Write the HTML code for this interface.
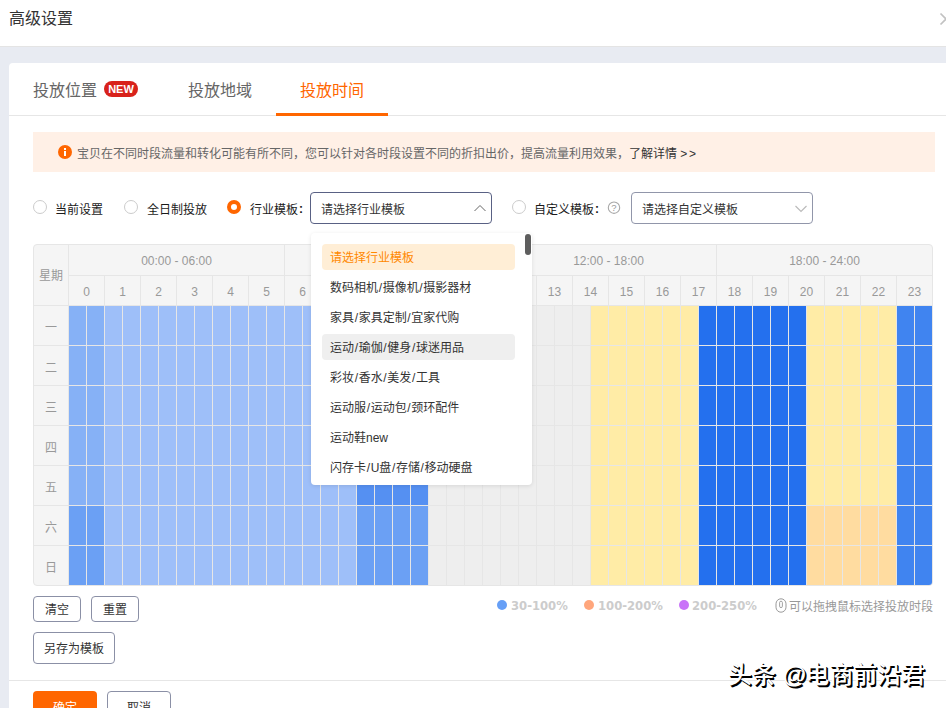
<!DOCTYPE html>
<html lang="zh-CN">
<head>
<meta charset="utf-8">
<title>高级设置</title>
<style>
*{box-sizing:border-box;margin:0;padding:0}
html,body{width:946px;height:708px;overflow:hidden;background:#e8ebf2}
body{position:relative;font-family:"Liberation Sans","Noto Sans CJK SC",sans-serif;font-size:12px;color:#333;line-height:1}
.abs,.abs>*{position:absolute}
#hd{position:absolute;left:0;top:0;width:946px;height:47px;background:#fff;border-bottom:1px solid #e4e4e4}
#hd .t{position:absolute;left:9px;top:11px;font-size:16px;line-height:16px;color:#333;white-space:nowrap}
#card{position:absolute;left:9px;top:63px;width:960px;height:700px;background:#fff;border-radius:4px 0 0 0}
.tab{position:absolute;top:83px;font-size:16px;line-height:16px;color:#666;white-space:nowrap}
.tab.on{color:#f60}
#new{position:absolute;left:104px;top:81px;width:34px;height:16px;border-radius:8px;background:#d8221b;color:#fff;font-size:11px;line-height:16px;font-weight:bold;text-align:center;letter-spacing:0}
#tabline{position:absolute;left:9px;top:115px;width:940px;height:1px;background:#e6e6e6}
#ink{position:absolute;left:276px;top:113px;width:112px;height:3px;background:#f60}
#notice{position:absolute;left:33px;top:132px;width:902px;height:40px;background:#fff0e6}
#notice .tx{position:absolute;left:44px;top:16px;line-height:12px;color:#666;white-space:nowrap}
#notice .tx b{font-weight:normal;color:#333}
#notice .ic{position:absolute;left:25px;top:13px;width:14px;height:14px;border-radius:50%;background:#f60}
#notice .ic:before{content:"";position:absolute;left:6px;top:3px;width:2px;height:2px;background:#fff}
#notice .ic:after{content:"";position:absolute;left:6px;top:6px;width:2px;height:5px;background:#fff}
.rd{position:absolute;top:200px;width:14px;height:14px;border-radius:50%;border:1px solid #ccc;background:#fff}
.rd.on{border:4px solid #f60}
.lb{position:absolute;top:204px;line-height:12px;color:#1a1a1a;white-space:nowrap}
.cl{margin-left:1px;position:relative;top:-1px}
.sel1{position:absolute;top:192px;height:32px;width:182px;border:1px solid #596184;border-radius:4px;background:#fff}
.sel1 span{position:absolute;left:10px;top:11px;line-height:12px;white-space:nowrap}
#tbl{position:absolute;left:33px;top:244px;width:900px;height:342px;background:#f5f5f5;border:1px solid #e6e6e6;border-radius:4px;overflow:hidden}
#tbl .bg{position:absolute;left:34px;top:60px;width:865px;height:281px;background:#e6e6e6}
#tbl .v{position:absolute;top:0;width:1px;background:#e6e6e6}
#tbl .h{position:absolute;left:0;height:1px;background:#e6e6e6}
.pd{position:absolute;top:0;width:216px;height:31px;line-height:33px;text-align:center;color:#999;border-left:1px solid #e6e6e6;border-bottom:1px solid #e6e6e6}
.hr{position:absolute;top:31px;width:36px;height:29px;line-height:33px;text-align:center;color:#999;border-left:1px solid #e6e6e6}
.day{position:absolute;left:0;width:34px;height:40px;line-height:44px;text-align:center;color:#999;border-top:1px solid #e6e6e6}
#wk{position:absolute;left:0;top:0;width:34px;height:60px;line-height:63px;text-align:center;color:#999}
.c{position:absolute;width:17px;height:39px;display:block}
.g{background:#eee}
.b1{background:#9ebff9}
.b2{background:#86b1f6}
.b3{background:#6ba0f4}
.b4{background:#5590f2}
.b5{background:#4084f0}
.b6{background:#2470ee}
.y{background:#ffeca6}
.o{background:#ffdca0}
#dd{position:absolute;left:311px;top:233px;width:221px;height:252px;background:#fff;border-radius:4px;box-shadow:0 1px 4px rgba(0,0,0,.10)}
.it{position:absolute;left:11px;width:193px;height:26px;line-height:28px;padding-left:8px;border-radius:4px;color:#333;white-space:nowrap}
.it.sel{background:#ffeed6;color:#f80}
.it.hov{background:#efefef}
#thumb{position:absolute;left:214px;top:1px;width:6px;height:21px;border-radius:3px;background:#5e5e5e}
.sl{font-style:normal;margin:0 .65px}
.btn{position:absolute;border:1px solid #8b90a6;border-radius:4px;background:#fff;text-align:center;color:#333;white-space:nowrap}
.lg{position:absolute;top:599px;line-height:14px;font-family:"DejaVu Sans","Liberation Sans",sans-serif;font-weight:bold;font-size:11.6px;color:#ccc;white-space:nowrap}
.dot{position:absolute;top:600px;width:10px;height:10px;border-radius:50%}
#tip{position:absolute;left:789px;top:601px;line-height:12px;color:#999;white-space:nowrap}
#ftline{position:absolute;left:9px;top:680px;width:940px;height:1px;background:#e6e6e6}
#wm{position:absolute;left:728px;top:661px;font-size:24px;line-height:28px;color:#fff;text-shadow:1px 1px 0 #000,1.6px 1.6px 0 #000;white-space:nowrap;font-weight:500;letter-spacing:-0.05px}
</style>
</head>
<body>
<div id="hd"><div class="t">高级设置</div>
<svg style="position:absolute;left:939px;top:12px" width="14" height="14" viewBox="0 0 14 14"><path d="M1.5 1.5 L12.5 12.5 M12.5 1.5 L1.5 12.5" stroke="#c2c2c2" stroke-width="1.7" fill="none"/></svg>
</div>
<div id="card"></div>
<div class="tab" style="left:33px">投放位置</div>
<div id="new">NEW</div>
<div class="tab" style="left:188px">投放地域</div>
<div class="tab on" style="left:300px">投放时间</div>
<div id="tabline"></div><div id="ink"></div>
<div id="notice"><div class="ic"></div><div class="tx">宝贝在不同时段流量和转化可能有所不同，您可以针对各时段设置不同的折扣出价，提高流量利用效果，<b>了解详情 <span style="letter-spacing:1.6px">&gt;&gt;</span></b></div></div>

<div class="rd" style="left:33px"></div><div class="lb" style="left:55px">当前设置</div>
<div class="rd" style="left:124px"></div><div class="lb" style="left:147px">全日制投放</div>
<div class="rd on" style="left:227px"></div><div class="lb" style="left:250px">行业模板<b class="cl">:</b></div>
<div class="sel1" style="left:310px"><span>请选择行业模板</span>
<svg style="position:absolute;left:162px;top:11px" width="14" height="8" viewBox="0 0 14 8"><path d="M1.5 7 L7 1.5 L12.5 7" stroke="#666" stroke-width="1" fill="none"/></svg></div>
<div class="rd" style="left:512px"></div><div class="lb" style="left:534px">自定义模板<b class="cl">:</b></div>
<svg style="position:absolute;left:607px;top:201px" width="14" height="14" viewBox="0 0 14 14"><circle cx="7" cy="6.7" r="5.7" fill="none" stroke="#a8a8a8" stroke-width="1.1"/><text x="7" y="10" font-size="9.5" text-anchor="middle" fill="#999" font-family="Liberation Sans, sans-serif">?</text></svg>
<div class="sel1" style="left:631px;border-color:#9196aa"><span>请选择自定义模板</span>
<svg style="position:absolute;left:162px;top:12px" width="14" height="8" viewBox="0 0 14 8"><path d="M1.5 1 L7 6.5 L12.5 1" stroke="#bbb" stroke-width="1.2" fill="none"/></svg></div>

<div id="tbl">
<div class="bg"></div>
<div id="wk">星期</div>
<div class="pd" style="left:34px">00:00 - 06:00</div><div class="pd" style="left:250px">06:00 - 12:00</div><div class="pd" style="left:466px">12:00 - 18:00</div><div class="pd" style="left:682px">18:00 - 24:00</div>
<div class="hr" style="left:34px">0</div><div class="hr" style="left:70px">1</div><div class="hr" style="left:106px">2</div><div class="hr" style="left:142px">3</div><div class="hr" style="left:178px">4</div><div class="hr" style="left:214px">5</div><div class="hr" style="left:250px">6</div><div class="hr" style="left:286px">7</div><div class="hr" style="left:322px">8</div><div class="hr" style="left:358px">9</div><div class="hr" style="left:394px">10</div><div class="hr" style="left:430px">11</div><div class="hr" style="left:466px">12</div><div class="hr" style="left:502px">13</div><div class="hr" style="left:538px">14</div><div class="hr" style="left:574px">15</div><div class="hr" style="left:610px">16</div><div class="hr" style="left:646px">17</div><div class="hr" style="left:682px">18</div><div class="hr" style="left:718px">19</div><div class="hr" style="left:754px">20</div><div class="hr" style="left:790px">21</div><div class="hr" style="left:826px">22</div><div class="hr" style="left:862px">23</div>
<div class="day" style="top:60px">一</div><div class="day" style="top:100px">二</div><div class="day" style="top:140px">三</div><div class="day" style="top:180px">四</div><div class="day" style="top:220px">五</div><div class="day" style="top:260px">六</div><div class="day" style="top:300px">日</div>
<i class="c b2" style="left:35px;top:61px"></i><i class="c b2" style="left:53px;top:61px"></i><i class="c b1" style="left:71px;top:61px"></i><i class="c b1" style="left:89px;top:61px"></i><i class="c b1" style="left:107px;top:61px"></i><i class="c b1" style="left:125px;top:61px"></i><i class="c b1" style="left:143px;top:61px"></i><i class="c b1" style="left:161px;top:61px"></i><i class="c b1" style="left:179px;top:61px"></i><i class="c b1" style="left:197px;top:61px"></i><i class="c b1" style="left:215px;top:61px"></i><i class="c b1" style="left:233px;top:61px"></i><i class="c b1" style="left:251px;top:61px"></i><i class="c b1" style="left:269px;top:61px"></i><i class="c b1" style="left:287px;top:61px"></i><i class="c b1" style="left:305px;top:61px"></i><i class="c b4" style="left:323px;top:61px"></i><i class="c b4" style="left:341px;top:61px"></i><i class="c b4" style="left:359px;top:61px"></i><i class="c b4" style="left:377px;top:61px"></i><i class="c g" style="left:395px;top:61px"></i><i class="c g" style="left:413px;top:61px"></i><i class="c g" style="left:431px;top:61px"></i><i class="c g" style="left:449px;top:61px"></i><i class="c g" style="left:467px;top:61px"></i><i class="c g" style="left:485px;top:61px"></i><i class="c g" style="left:503px;top:61px"></i><i class="c g" style="left:521px;top:61px"></i><i class="c g" style="left:539px;top:61px"></i><i class="c y" style="left:557px;top:61px"></i><i class="c y" style="left:575px;top:61px"></i><i class="c y" style="left:593px;top:61px"></i><i class="c y" style="left:611px;top:61px"></i><i class="c y" style="left:629px;top:61px"></i><i class="c y" style="left:647px;top:61px"></i><i class="c b6" style="left:665px;top:61px"></i><i class="c b6" style="left:683px;top:61px"></i><i class="c b6" style="left:701px;top:61px"></i><i class="c b6" style="left:719px;top:61px"></i><i class="c b6" style="left:737px;top:61px"></i><i class="c b6" style="left:755px;top:61px"></i><i class="c y" style="left:773px;top:61px"></i><i class="c y" style="left:791px;top:61px"></i><i class="c y" style="left:809px;top:61px"></i><i class="c y" style="left:827px;top:61px"></i><i class="c y" style="left:845px;top:61px"></i><i class="c b5" style="left:863px;top:61px"></i><i class="c b5" style="left:881px;top:61px"></i><i class="c b2" style="left:35px;top:101px"></i><i class="c b2" style="left:53px;top:101px"></i><i class="c b1" style="left:71px;top:101px"></i><i class="c b1" style="left:89px;top:101px"></i><i class="c b1" style="left:107px;top:101px"></i><i class="c b1" style="left:125px;top:101px"></i><i class="c b1" style="left:143px;top:101px"></i><i class="c b1" style="left:161px;top:101px"></i><i class="c b1" style="left:179px;top:101px"></i><i class="c b1" style="left:197px;top:101px"></i><i class="c b1" style="left:215px;top:101px"></i><i class="c b1" style="left:233px;top:101px"></i><i class="c b1" style="left:251px;top:101px"></i><i class="c b1" style="left:269px;top:101px"></i><i class="c b1" style="left:287px;top:101px"></i><i class="c b1" style="left:305px;top:101px"></i><i class="c b4" style="left:323px;top:101px"></i><i class="c b4" style="left:341px;top:101px"></i><i class="c b4" style="left:359px;top:101px"></i><i class="c b4" style="left:377px;top:101px"></i><i class="c g" style="left:395px;top:101px"></i><i class="c g" style="left:413px;top:101px"></i><i class="c g" style="left:431px;top:101px"></i><i class="c g" style="left:449px;top:101px"></i><i class="c g" style="left:467px;top:101px"></i><i class="c g" style="left:485px;top:101px"></i><i class="c g" style="left:503px;top:101px"></i><i class="c g" style="left:521px;top:101px"></i><i class="c g" style="left:539px;top:101px"></i><i class="c y" style="left:557px;top:101px"></i><i class="c y" style="left:575px;top:101px"></i><i class="c y" style="left:593px;top:101px"></i><i class="c y" style="left:611px;top:101px"></i><i class="c y" style="left:629px;top:101px"></i><i class="c y" style="left:647px;top:101px"></i><i class="c b6" style="left:665px;top:101px"></i><i class="c b6" style="left:683px;top:101px"></i><i class="c b6" style="left:701px;top:101px"></i><i class="c b6" style="left:719px;top:101px"></i><i class="c b6" style="left:737px;top:101px"></i><i class="c b6" style="left:755px;top:101px"></i><i class="c y" style="left:773px;top:101px"></i><i class="c y" style="left:791px;top:101px"></i><i class="c y" style="left:809px;top:101px"></i><i class="c y" style="left:827px;top:101px"></i><i class="c y" style="left:845px;top:101px"></i><i class="c b5" style="left:863px;top:101px"></i><i class="c b5" style="left:881px;top:101px"></i><i class="c b2" style="left:35px;top:141px"></i><i class="c b2" style="left:53px;top:141px"></i><i class="c b1" style="left:71px;top:141px"></i><i class="c b1" style="left:89px;top:141px"></i><i class="c b1" style="left:107px;top:141px"></i><i class="c b1" style="left:125px;top:141px"></i><i class="c b1" style="left:143px;top:141px"></i><i class="c b1" style="left:161px;top:141px"></i><i class="c b1" style="left:179px;top:141px"></i><i class="c b1" style="left:197px;top:141px"></i><i class="c b1" style="left:215px;top:141px"></i><i class="c b1" style="left:233px;top:141px"></i><i class="c b1" style="left:251px;top:141px"></i><i class="c b1" style="left:269px;top:141px"></i><i class="c b1" style="left:287px;top:141px"></i><i class="c b1" style="left:305px;top:141px"></i><i class="c b4" style="left:323px;top:141px"></i><i class="c b4" style="left:341px;top:141px"></i><i class="c b4" style="left:359px;top:141px"></i><i class="c b4" style="left:377px;top:141px"></i><i class="c g" style="left:395px;top:141px"></i><i class="c g" style="left:413px;top:141px"></i><i class="c g" style="left:431px;top:141px"></i><i class="c g" style="left:449px;top:141px"></i><i class="c g" style="left:467px;top:141px"></i><i class="c g" style="left:485px;top:141px"></i><i class="c g" style="left:503px;top:141px"></i><i class="c g" style="left:521px;top:141px"></i><i class="c g" style="left:539px;top:141px"></i><i class="c y" style="left:557px;top:141px"></i><i class="c y" style="left:575px;top:141px"></i><i class="c y" style="left:593px;top:141px"></i><i class="c y" style="left:611px;top:141px"></i><i class="c y" style="left:629px;top:141px"></i><i class="c y" style="left:647px;top:141px"></i><i class="c b6" style="left:665px;top:141px"></i><i class="c b6" style="left:683px;top:141px"></i><i class="c b6" style="left:701px;top:141px"></i><i class="c b6" style="left:719px;top:141px"></i><i class="c b6" style="left:737px;top:141px"></i><i class="c b6" style="left:755px;top:141px"></i><i class="c y" style="left:773px;top:141px"></i><i class="c y" style="left:791px;top:141px"></i><i class="c y" style="left:809px;top:141px"></i><i class="c y" style="left:827px;top:141px"></i><i class="c y" style="left:845px;top:141px"></i><i class="c b5" style="left:863px;top:141px"></i><i class="c b5" style="left:881px;top:141px"></i><i class="c b2" style="left:35px;top:181px"></i><i class="c b2" style="left:53px;top:181px"></i><i class="c b1" style="left:71px;top:181px"></i><i class="c b1" style="left:89px;top:181px"></i><i class="c b1" style="left:107px;top:181px"></i><i class="c b1" style="left:125px;top:181px"></i><i class="c b1" style="left:143px;top:181px"></i><i class="c b1" style="left:161px;top:181px"></i><i class="c b1" style="left:179px;top:181px"></i><i class="c b1" style="left:197px;top:181px"></i><i class="c b1" style="left:215px;top:181px"></i><i class="c b1" style="left:233px;top:181px"></i><i class="c b1" style="left:251px;top:181px"></i><i class="c b1" style="left:269px;top:181px"></i><i class="c b1" style="left:287px;top:181px"></i><i class="c b1" style="left:305px;top:181px"></i><i class="c b4" style="left:323px;top:181px"></i><i class="c b4" style="left:341px;top:181px"></i><i class="c b4" style="left:359px;top:181px"></i><i class="c b4" style="left:377px;top:181px"></i><i class="c g" style="left:395px;top:181px"></i><i class="c g" style="left:413px;top:181px"></i><i class="c g" style="left:431px;top:181px"></i><i class="c g" style="left:449px;top:181px"></i><i class="c g" style="left:467px;top:181px"></i><i class="c g" style="left:485px;top:181px"></i><i class="c g" style="left:503px;top:181px"></i><i class="c g" style="left:521px;top:181px"></i><i class="c g" style="left:539px;top:181px"></i><i class="c y" style="left:557px;top:181px"></i><i class="c y" style="left:575px;top:181px"></i><i class="c y" style="left:593px;top:181px"></i><i class="c y" style="left:611px;top:181px"></i><i class="c y" style="left:629px;top:181px"></i><i class="c y" style="left:647px;top:181px"></i><i class="c b6" style="left:665px;top:181px"></i><i class="c b6" style="left:683px;top:181px"></i><i class="c b6" style="left:701px;top:181px"></i><i class="c b6" style="left:719px;top:181px"></i><i class="c b6" style="left:737px;top:181px"></i><i class="c b6" style="left:755px;top:181px"></i><i class="c y" style="left:773px;top:181px"></i><i class="c y" style="left:791px;top:181px"></i><i class="c y" style="left:809px;top:181px"></i><i class="c y" style="left:827px;top:181px"></i><i class="c y" style="left:845px;top:181px"></i><i class="c b5" style="left:863px;top:181px"></i><i class="c b5" style="left:881px;top:181px"></i><i class="c b2" style="left:35px;top:221px"></i><i class="c b2" style="left:53px;top:221px"></i><i class="c b1" style="left:71px;top:221px"></i><i class="c b1" style="left:89px;top:221px"></i><i class="c b1" style="left:107px;top:221px"></i><i class="c b1" style="left:125px;top:221px"></i><i class="c b1" style="left:143px;top:221px"></i><i class="c b1" style="left:161px;top:221px"></i><i class="c b1" style="left:179px;top:221px"></i><i class="c b1" style="left:197px;top:221px"></i><i class="c b1" style="left:215px;top:221px"></i><i class="c b1" style="left:233px;top:221px"></i><i class="c b1" style="left:251px;top:221px"></i><i class="c b1" style="left:269px;top:221px"></i><i class="c b1" style="left:287px;top:221px"></i><i class="c b1" style="left:305px;top:221px"></i><i class="c b4" style="left:323px;top:221px"></i><i class="c b4" style="left:341px;top:221px"></i><i class="c b4" style="left:359px;top:221px"></i><i class="c b4" style="left:377px;top:221px"></i><i class="c g" style="left:395px;top:221px"></i><i class="c g" style="left:413px;top:221px"></i><i class="c g" style="left:431px;top:221px"></i><i class="c g" style="left:449px;top:221px"></i><i class="c g" style="left:467px;top:221px"></i><i class="c g" style="left:485px;top:221px"></i><i class="c g" style="left:503px;top:221px"></i><i class="c g" style="left:521px;top:221px"></i><i class="c g" style="left:539px;top:221px"></i><i class="c y" style="left:557px;top:221px"></i><i class="c y" style="left:575px;top:221px"></i><i class="c y" style="left:593px;top:221px"></i><i class="c y" style="left:611px;top:221px"></i><i class="c y" style="left:629px;top:221px"></i><i class="c y" style="left:647px;top:221px"></i><i class="c b6" style="left:665px;top:221px"></i><i class="c b6" style="left:683px;top:221px"></i><i class="c b6" style="left:701px;top:221px"></i><i class="c b6" style="left:719px;top:221px"></i><i class="c b6" style="left:737px;top:221px"></i><i class="c b6" style="left:755px;top:221px"></i><i class="c y" style="left:773px;top:221px"></i><i class="c y" style="left:791px;top:221px"></i><i class="c y" style="left:809px;top:221px"></i><i class="c y" style="left:827px;top:221px"></i><i class="c y" style="left:845px;top:221px"></i><i class="c b5" style="left:863px;top:221px"></i><i class="c b5" style="left:881px;top:221px"></i><i class="c b3" style="left:35px;top:261px"></i><i class="c b3" style="left:53px;top:261px"></i><i class="c b1" style="left:71px;top:261px"></i><i class="c b1" style="left:89px;top:261px"></i><i class="c b1" style="left:107px;top:261px"></i><i class="c b1" style="left:125px;top:261px"></i><i class="c b1" style="left:143px;top:261px"></i><i class="c b1" style="left:161px;top:261px"></i><i class="c b1" style="left:179px;top:261px"></i><i class="c b1" style="left:197px;top:261px"></i><i class="c b1" style="left:215px;top:261px"></i><i class="c b1" style="left:233px;top:261px"></i><i class="c b1" style="left:251px;top:261px"></i><i class="c b1" style="left:269px;top:261px"></i><i class="c b1" style="left:287px;top:261px"></i><i class="c b1" style="left:305px;top:261px"></i><i class="c b3" style="left:323px;top:261px"></i><i class="c b3" style="left:341px;top:261px"></i><i class="c b3" style="left:359px;top:261px"></i><i class="c b3" style="left:377px;top:261px"></i><i class="c g" style="left:395px;top:261px"></i><i class="c g" style="left:413px;top:261px"></i><i class="c g" style="left:431px;top:261px"></i><i class="c g" style="left:449px;top:261px"></i><i class="c g" style="left:467px;top:261px"></i><i class="c g" style="left:485px;top:261px"></i><i class="c g" style="left:503px;top:261px"></i><i class="c g" style="left:521px;top:261px"></i><i class="c g" style="left:539px;top:261px"></i><i class="c y" style="left:557px;top:261px"></i><i class="c y" style="left:575px;top:261px"></i><i class="c y" style="left:593px;top:261px"></i><i class="c y" style="left:611px;top:261px"></i><i class="c y" style="left:629px;top:261px"></i><i class="c y" style="left:647px;top:261px"></i><i class="c b6" style="left:665px;top:261px"></i><i class="c b6" style="left:683px;top:261px"></i><i class="c b6" style="left:701px;top:261px"></i><i class="c b6" style="left:719px;top:261px"></i><i class="c b6" style="left:737px;top:261px"></i><i class="c b6" style="left:755px;top:261px"></i><i class="c o" style="left:773px;top:261px"></i><i class="c o" style="left:791px;top:261px"></i><i class="c o" style="left:809px;top:261px"></i><i class="c o" style="left:827px;top:261px"></i><i class="c o" style="left:845px;top:261px"></i><i class="c b5" style="left:863px;top:261px"></i><i class="c b5" style="left:881px;top:261px"></i><i class="c b3" style="left:35px;top:301px"></i><i class="c b3" style="left:53px;top:301px"></i><i class="c b1" style="left:71px;top:301px"></i><i class="c b1" style="left:89px;top:301px"></i><i class="c b1" style="left:107px;top:301px"></i><i class="c b1" style="left:125px;top:301px"></i><i class="c b1" style="left:143px;top:301px"></i><i class="c b1" style="left:161px;top:301px"></i><i class="c b1" style="left:179px;top:301px"></i><i class="c b1" style="left:197px;top:301px"></i><i class="c b1" style="left:215px;top:301px"></i><i class="c b1" style="left:233px;top:301px"></i><i class="c b1" style="left:251px;top:301px"></i><i class="c b1" style="left:269px;top:301px"></i><i class="c b1" style="left:287px;top:301px"></i><i class="c b1" style="left:305px;top:301px"></i><i class="c b3" style="left:323px;top:301px"></i><i class="c b3" style="left:341px;top:301px"></i><i class="c b3" style="left:359px;top:301px"></i><i class="c b3" style="left:377px;top:301px"></i><i class="c g" style="left:395px;top:301px"></i><i class="c g" style="left:413px;top:301px"></i><i class="c g" style="left:431px;top:301px"></i><i class="c g" style="left:449px;top:301px"></i><i class="c g" style="left:467px;top:301px"></i><i class="c g" style="left:485px;top:301px"></i><i class="c g" style="left:503px;top:301px"></i><i class="c g" style="left:521px;top:301px"></i><i class="c g" style="left:539px;top:301px"></i><i class="c y" style="left:557px;top:301px"></i><i class="c y" style="left:575px;top:301px"></i><i class="c y" style="left:593px;top:301px"></i><i class="c y" style="left:611px;top:301px"></i><i class="c y" style="left:629px;top:301px"></i><i class="c y" style="left:647px;top:301px"></i><i class="c b6" style="left:665px;top:301px"></i><i class="c b6" style="left:683px;top:301px"></i><i class="c b6" style="left:701px;top:301px"></i><i class="c b6" style="left:719px;top:301px"></i><i class="c b6" style="left:737px;top:301px"></i><i class="c b6" style="left:755px;top:301px"></i><i class="c o" style="left:773px;top:301px"></i><i class="c o" style="left:791px;top:301px"></i><i class="c o" style="left:809px;top:301px"></i><i class="c o" style="left:827px;top:301px"></i><i class="c o" style="left:845px;top:301px"></i><i class="c b5" style="left:863px;top:301px"></i><i class="c b5" style="left:881px;top:301px"></i>
</div>

<div id="dd"><div class="it sel" style="top:11px">请选择行业模板</div><div class="it" style="top:41px">数码相机<i class="sl">/</i>摄像机<i class="sl">/</i>摄影器材</div><div class="it" style="top:71px">家具<i class="sl">/</i>家具定制<i class="sl">/</i>宜家代购</div><div class="it hov" style="top:101px">运动<i class="sl">/</i>瑜伽<i class="sl">/</i>健身<i class="sl">/</i>球迷用品</div><div class="it" style="top:131px">彩妆<i class="sl">/</i>香水<i class="sl">/</i>美发<i class="sl">/</i>工具</div><div class="it" style="top:161px">运动服<i class="sl">/</i>运动包<i class="sl">/</i>颈环配件</div><div class="it" style="top:191px">运动鞋new</div><div class="it" style="top:221px">闪存卡<i class="sl">/</i>U盘<i class="sl">/</i>存储<i class="sl">/</i>移动硬盘</div><div id="thumb"></div></div>

<div class="btn" style="left:33px;top:596px;width:48px;height:26px;line-height:26px">清空</div>
<div class="btn" style="left:91px;top:596px;width:48px;height:26px;line-height:26px">重置</div>
<div class="btn" style="left:33px;top:632px;width:82px;height:32px;line-height:32px">另存为模板</div>

<div class="dot" style="left:497px;background:#669ff6"></div><div class="lg" style="left:511px">30-100%</div>
<div class="dot" style="left:584px;background:#ffa67c"></div><div class="lg" style="left:598px">100-200%</div>
<div class="dot" style="left:679px;background:#c974f8"></div><div class="lg" style="left:692px">200-250%</div>
<svg style="position:absolute;left:775px;top:598px" width="12" height="15" viewBox="0 0 12 15"><rect x="1" y="0.8" width="10" height="13.4" rx="5" ry="5" fill="none" stroke="#999" stroke-width="1"/><rect x="4.6" y="3.2" width="2.8" height="6.4" rx="1.4" fill="none" stroke="#999" stroke-width="0.9"/></svg>
<div id="tip">可以拖拽鼠标选择投放时段</div>

<div id="ftline"></div>
<div class="btn" style="left:33px;top:691px;width:64px;height:32px;line-height:34px;background:#f60;border:0;color:#fff">确定</div>
<div class="btn" style="left:107px;top:691px;width:64px;height:32px;line-height:32px">取消</div>
<div id="wm">头条 <span style="margin-right:-1.5px">@</span>电商前沿君</div>
</body>
</html>
